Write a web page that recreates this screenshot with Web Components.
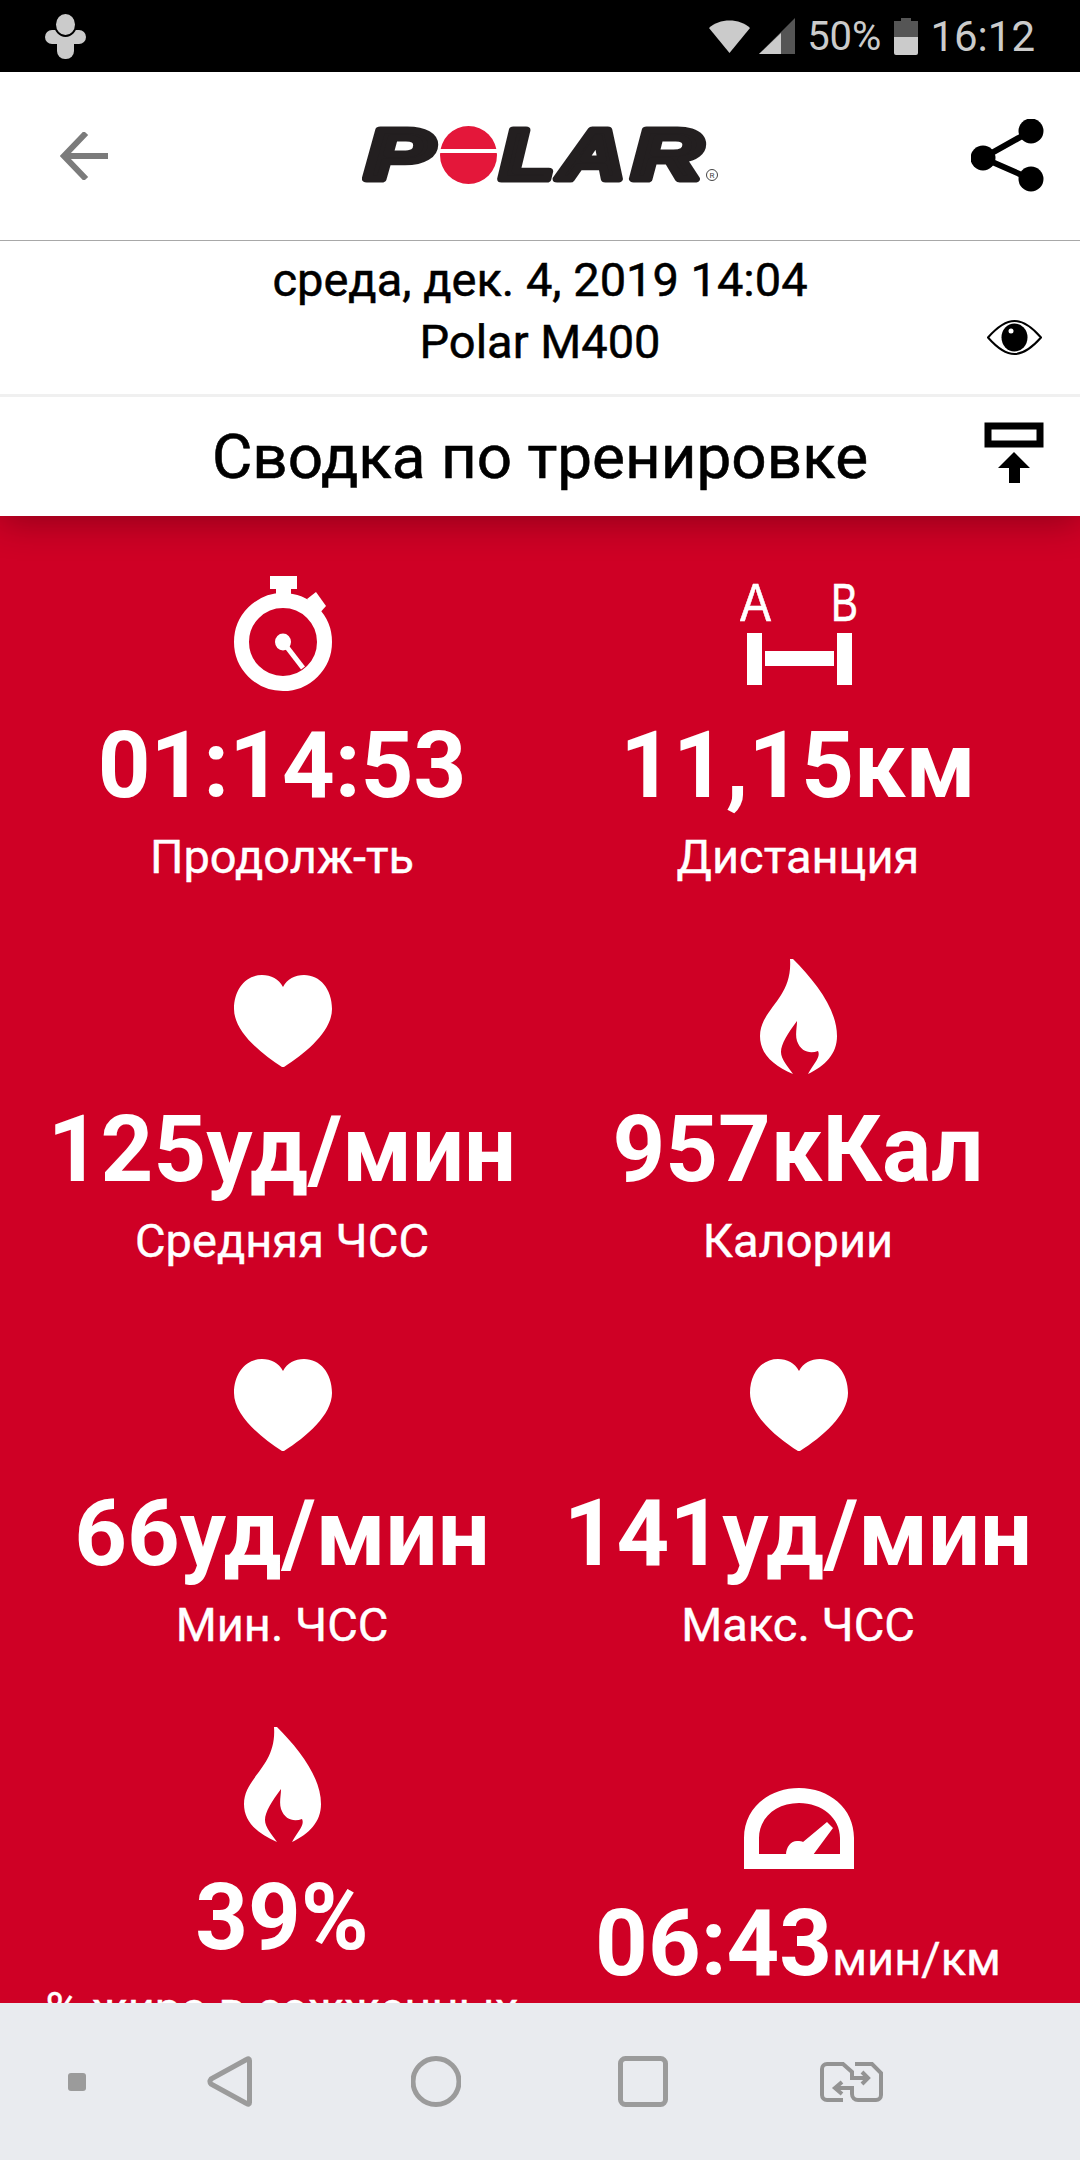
<!DOCTYPE html>
<html lang="ru">
<head>
<meta charset="utf-8">
<title>Polar</title>
<style>
  html, body { margin: 0; height: 100%; }
  body {
    width: 1080px;
    height: 2160px;
    overflow: hidden;
    display: flex;
    flex-direction: column;
    font-family: Roboto, "Liberation Sans", sans-serif;
  }
</style>
</head>
<body>
  <status-bar></status-bar>
  <app-bar></app-bar>
  <workout-info date="среда, дек. 4, 2019 14:04" device="Polar M400"></workout-info>
  <section-title>Сводка по тренировке</section-title>
  <metric-grid>
    <metric-tile icon="watch"><span slot="value">01:14:53</span>Продолж-ть</metric-tile>
    <metric-tile icon="distance"><span slot="value">11,15км</span>Дистанция</metric-tile>
    <metric-tile icon="heart"><span slot="value">125уд/мин</span>Средняя ЧСС</metric-tile>
    <metric-tile icon="flame"><span slot="value">957кКал</span>Калории</metric-tile>
    <metric-tile icon="heart"><span slot="value">66уд/мин</span>Мин. ЧСС</metric-tile>
    <metric-tile icon="heart"><span slot="value">141уд/мин</span>Макс. ЧСС</metric-tile>
    <metric-tile icon="flame"><span slot="value">39%</span>% жира в сожженных калориях</metric-tile>
    <metric-tile icon="gauge"><span slot="value">06:43</span><span slot="unit">мин/км</span>Средний темп</metric-tile>
  </metric-grid>
  <nav-bar></nav-bar>

<script>
// icons of the red tiles, lift = gap kept under the icon, nudge = sideways fix
const TILE_ICONS = {
  watch: { lift: 0, nudge: 2, svg: `<svg width="98" height="115" viewBox="0 0 98 115" fill="#fff">
    <rect x="36" y="0" width="27" height="13"/><rect x="42" y="13" width="15" height="12"/>
    <path d="M73 23l9-7 10 14-8 9z"/>
    <circle cx="49" cy="66" r="41.5" fill="none" stroke="#fff" stroke-width="15"/>
    <ellipse cx="49" cy="66" rx="8" ry="8.5"/>
    <path d="M49 66l20 26" stroke="#fff" stroke-width="5" fill="none"/></svg>` },
  distance: { lift: 6, nudge: 2, svg: `<svg width="118" height="104" viewBox="0 0 118 104" fill="#fff" stroke="none">
    <text x="0" y="40" font-family="Liberation Sans" font-size="54" textLength="31" lengthAdjust="spacingAndGlyphs" stroke="#fff" stroke-width=".6">A</text>
    <text x="91" y="40" font-family="Liberation Sans" font-size="54" textLength="27" lengthAdjust="spacingAndGlyphs" stroke="#fff" stroke-width=".6">B</text>
    <rect x="7" y="52" width="15" height="52"/><rect x="97" y="52" width="15" height="52"/>
    <rect x="25" y="70" width="69" height="15"/></svg>` },
  heart: { lift: 8, nudge: 2, svg: `<svg width="98" height="92" viewBox="0 0 98 92" fill="#fff">
    <path d="M49 12C45 4 37 0 28 0 12 0 0 14 0 34 0 56 26 78 48 92h2C72 78 98 56 98 34 98 14 86 0 70 0 61 0 53 4 49 12z"/></svg>` },
  flame: { lift: 0, nudge: 0, svg: `<svg width="77" height="116" viewBox="0 0 77 116" fill="#fff">
    <path d="M30 0h3C55 22 77 50 77 77 77 95 65 107 48 115 54 104 61 98 58 92 50 95 41 93 37 82 35 76 37 68 37 62 28 74 21 85 21 93 21 100 28 108 33 115 13 106 0 95 0 77 0 50 33 40 30 0z"/></svg>` },
  gauge: { lift: 0, nudge: 2, svg: `<svg width="110" height="81" viewBox="0 0 110 81" fill="#fff">
    <path fill-rule="evenodd" d="M0 81V50C0 20 25 0 55 0s55 20 55 50v31zM15 66h81V50C96 30 78 15 55 15S15 30 15 50z"/>
    <path d="M42 67c0-8 5-14 11-14 3 0 5 0 6 1L83 34l6 6L69 67z"/></svg>` }
};

class StatusBar extends HTMLElement {
  constructor() {
    super();
    this.attachShadow({ mode: 'open' });
    this.shadowRoot.innerHTML = `
      <style>
        :host {
          display: flex;
          flex: none;
          align-items: center;
          height: 72px;
          padding: 0 45px;
          background: #000;
          color: #cbcbcb;
          font-size: 42px;
          font-family: Roboto, sans-serif;
          box-sizing: border-box;
        }
        .right { display: flex; align-items: center; margin-left: auto; }
        svg { display: block; }
        .pct { font-size: 40px; margin: 0 13px 0 12px; }
        .time { margin-left: 12px; }
      </style>
      <svg width="41" height="45" viewBox="0 0 41 45" fill="#cbcbcb">
        <rect x="0" y="16" width="41" height="14" rx="7"/>
        <rect x="12" y="16" width="17" height="29" rx="8"/>
        <ellipse cx="20.500" cy="10.500" rx="10.500" ry="11.500" stroke="#000" stroke-width="2"/>
      </svg>
      <div class="right">
        <svg width="41" height="33" viewBox="0 0 41 33"><path d="M0 8C10-2 31-2 41 8L20.500 33z" fill="#cbcbcb"/></svg>
        <svg width="36" height="36" viewBox="0 0 36 36" style="margin-left:9px"><path d="M36 0v36H0z" fill="#555"/><path d="M22 15v21H0z" fill="#cbcbcb"/></svg>
        <span class="pct">50%</span>
        <svg width="24" height="37" viewBox="0 0 24 37"><path d="M7 0h10v3h7v16H0V3h7z" fill="#555"/><path d="M0 19h24v16a2 2 0 0 1-2 2H2a2 2 0 0 1-2-2z" fill="#cbcbcb"/></svg>
        <span class="time">16:12</span>
      </div>
    `;
  }
}

class AppBar extends HTMLElement {
  constructor() {
    super();
    this.attachShadow({ mode: 'open' });
    this.shadowRoot.innerHTML = `
      <style>
        :host {
          display: flex;
          flex: none;
          align-items: center;
          justify-content: space-between;
          height: 169px;
          padding: 0 36px 0 60px;
          background: #fff;
          border-bottom: 1px solid #a8a8a8;
          box-sizing: border-box;
        }
        svg { display: block; }
        .logo { margin: 0 0 0 7px; }
        .share { margin-top: -2px; }
      </style>
      <svg width="48" height="48" viewBox="0 0 48 48" fill="none" stroke="#7b7b7b" stroke-width="6">
        <path d="M26 1L4 24l22 23M4 24h44"/>
      </svg>
      <svg class="logo" width="362" height="60" viewBox="0 0 362 60">
        <g font-family="Liberation Sans" font-weight="700" font-style="italic" font-size="70" fill="#231f20" stroke="#231f20" stroke-width="7" stroke-linejoin="round">
          <text x="3" y="53" textLength="68" lengthAdjust="spacingAndGlyphs">P</text>
          <text x="138" y="53" textLength="54" lengthAdjust="spacingAndGlyphs">L</text>
          <text x="197" y="53" textLength="66" lengthAdjust="spacingAndGlyphs">A</text>
          <text x="270" y="53" textLength="70" lengthAdjust="spacingAndGlyphs">R</text>
        </g>
        <ellipse cx="106.500" cy="29" rx="28.500" ry="29" fill="#e4173a"/>
        <rect x="76" y="23" width="62" height="4" fill="#fff"/>
        <circle cx="350" cy="49" r="5.500" fill="none" stroke="#444" stroke-width="1"/>
        <text x="350" y="52" text-anchor="middle" font-family="Roboto" font-size="8" fill="#444">R</text>
      </svg>
      <svg class="share" width="73" height="73" viewBox="0 0 73 73" fill="#000">
        <circle cx="60" cy="12" r="12.500"/><circle cx="12" cy="39" r="12.500"/><circle cx="60" cy="60" r="12.500"/>
        <path d="M60 12L12 39l48 21" fill="none" stroke="#000" stroke-width="6"/>
      </svg>
    `;
  }
}

class WorkoutInfo extends HTMLElement {
  constructor() {
    super();
    this.attachShadow({ mode: 'open' });
    this.shadowRoot.innerHTML = `
      <style>
        :host {
          display: block;
          flex: none;
          position: relative;
          height: 156px;
          padding-top: 8px;
          background: #fff;
          border-bottom: 3px solid #f0f0f0;
          box-sizing: border-box;
          text-align: center;
          color: #000;
          font-size: 47px;
          -webkit-text-stroke: .5px #000;
          line-height: 62px;
          font-family: Roboto, sans-serif;
        }
        svg { position: absolute; left: 987px; top: 79px; }
      </style>
      <div id="date"></div>
      <div id="device"></div>
      <svg width="55" height="35" viewBox="0 0 55 35">
        <path d="M1 17.500C12 5 20 1 27.500 1S43 5 54 17.500C43 30 35 34 27.500 34S12 30 1 17.500z" fill="none" stroke="#000" stroke-width="2"/>
        <ellipse cx="27.500" cy="17.500" rx="13" ry="14" fill="#000"/>
        <circle cx="24" cy="11" r="2.500" fill="#fff"/>
      </svg>
    `;
  }

  connectedCallback() {
    this.shadowRoot.getElementById('date').textContent = this.getAttribute('date');
    this.shadowRoot.getElementById('device').textContent = this.getAttribute('device');
  }
}

class SectionTitle extends HTMLElement {
  constructor() {
    super();
    this.attachShadow({ mode: 'open' });
    this.shadowRoot.innerHTML = `
      <style>
        :host {
          display: flex;
          flex: none;
          align-items: center;
          justify-content: center;
          position: relative;
          z-index: 1;
          height: 119px;
          background: #fff;
          color: #000;
          font-size: 62px;
          -webkit-text-stroke: .6px #000;
          font-family: Roboto, sans-serif;
          box-shadow: 0 6px 34px rgba(0,0,0,.3);
          clip-path: inset(0 0 -60px 0);
        }
        svg { position: absolute; left: 984px; top: 25px; }
      </style>
      <slot></slot>
      <svg width="60" height="61" viewBox="0 0 60 61">
        <rect x="4" y="4" width="52" height="18" fill="none" stroke="#000" stroke-width="7"/>
        <path d="M30 30l16 16H36v15H25V46H14z" fill="#000"/>
      </svg>
    `;
  }
}

class MetricGrid extends HTMLElement {
  constructor() {
    super();
    this.attachShadow({ mode: 'open' });
    this.shadowRoot.innerHTML = `
      <style>
        :host {
          display: grid;
          flex: 1;
          min-height: 0;
          overflow: hidden;
          grid-template-columns: 516px 516px;
          align-content: start;
          padding: 0 24px;
          background: #cf0025;
        }
      </style>
      <slot></slot>
    `;
  }
}

class MetricTile extends HTMLElement {
  constructor() {
    super();
    this.attachShadow({ mode: 'open' });
    this.shadowRoot.innerHTML = `
      <style>
        :host {
          display: flex;
          flex-direction: column;
          align-items: center;
          justify-content: center;
          padding: 57px 10px 17px;
          color: #fff;
          text-align: center;
          font-family: Roboto, sans-serif;
          font-size: 47px;
          -webkit-text-stroke: .4px #fff;
          line-height: 52px;
          box-sizing: border-box;
        }
        .icon { display: flex; align-items: flex-end; justify-content: center; height: 118px; }
        .icon svg { display: block; }
        .value { margin-top: 12px; font-size: 92px; font-weight: 700; line-height: 126px; white-space: nowrap; -webkit-text-stroke: 0; }
        ::slotted([slot="unit"]) { font-size: 47px; font-weight: 400; line-height: 1; -webkit-text-stroke: .4px #fff; }
        .label { margin-top: 2px; }
      </style>
      <div class="icon"></div>
      <div class="value"><slot name="value"></slot><slot name="unit"></slot></div>
      <div class="label"><slot></slot></div>
    `;
  }

  connectedCallback() {
    const icon = TILE_ICONS[this.getAttribute('icon')];
    const box = this.shadowRoot.querySelector('.icon');
    box.innerHTML = icon.svg;
    box.firstElementChild.style.marginBottom = icon.lift + 'px';
    box.firstElementChild.style.marginLeft = icon.nudge + 'px';
  }
}

class NavBar extends HTMLElement {
  constructor() {
    super();
    this.attachShadow({ mode: 'open' });
    this.shadowRoot.innerHTML = `
      <style>
        :host {
          display: flex;
          flex: none;
          position: relative;
          z-index: 2;
          align-items: center;
          height: 157px;
          padding: 0 0 0 68px;
          background: #e9ebef;
          box-sizing: border-box;
        }
        svg { display: block; fill: none; stroke: #9b9b9b; stroke-width: 5; }
      </style>
      <svg width="18" height="18" viewBox="0 0 18 18" style="fill:#9b9b9b;stroke:none"><rect width="18" height="18" rx="3"/></svg>
      <svg width="45" height="51" viewBox="0 0 45 51" style="margin-left:121px"><path d="M42.500 4.500v42q0 3-3 1L4 28q-2-2.500 0-5L39.500 3.500q3-2 3 1z"/></svg>
      <svg width="50" height="51" viewBox="0 0 50 51" style="margin-left:159px"><circle cx="25" cy="25.500" r="23"/></svg>
      <svg width="50" height="51" viewBox="0 0 50 51" style="margin-left:157px"><rect x="2.500" y="2.500" width="45" height="46" rx="5"/></svg>
      <svg width="63" height="40" viewBox="0 0 63 40" style="margin-left:152px;stroke-width:4;stroke:#939393">
        <path d="M23 38H7a5 5 0 0 1-5-5V7a5 5 0 0 1 5-5h16l9 8v6h16"/>
        <path d="M42 10l6 6-6 6"/>
        <path d="M35 2h17l9 9v22a5 5 0 0 1-5 5H38a6 6 0 0 1-6-6v-6H15"/>
        <path d="M22 20l-7 6 7 6"/>
      </svg>
    `;
  }
}

customElements.define('status-bar', StatusBar);
customElements.define('app-bar', AppBar);
customElements.define('workout-info', WorkoutInfo);
customElements.define('section-title', SectionTitle);
customElements.define('metric-grid', MetricGrid);
customElements.define('metric-tile', MetricTile);
customElements.define('nav-bar', NavBar);
</script>
</body>
</html>
